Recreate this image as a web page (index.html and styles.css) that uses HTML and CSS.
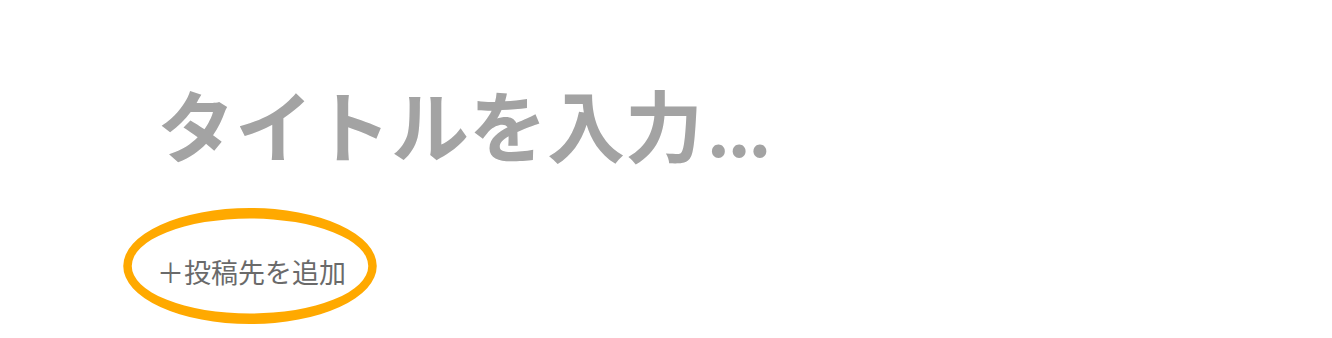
FILE: index.html
```html
<!DOCTYPE html>
<html lang="ja">
<head>
<meta charset="utf-8">
<link rel="stylesheet" href="styles.css">
</head>
<body>
<main class="editor">
  <h1 class="title">タイトルを入力<span class="dots">...</span></h1>
  <div class="dest">
    <span class="dest-btn">＋投稿先を追加</span>
    <svg class="mark" width="264" height="128" viewBox="0 0 264 128" aria-hidden="true">
      <path fill="#ffa900" fill-rule="evenodd" d="M5.25,64 a126.75,58 0 1,0 253.5,0 a126.75,58 0 1,0 -253.5,0 Z M13.75,64 a118.25,47.5 0 1,0 236.5,0 a118.25,47.5 0 1,0 -236.5,0 Z"/>
    </svg>
  </div>
</main>
</body>
</html>
```
FILE: styles.css
```css
html, body {
  margin: 0;
  padding: 0;
  background: #ffffff;
}
body {
  width: 1332px;
  height: 338px;
  overflow: hidden;
  font-family: "Noto Sans CJK JP", "Noto Sans", sans-serif;
}
.editor {
  padding: 69px 0 0 157px;
}
.title {
  margin: 0;
  height: 108px;
  font-size: 78px;
  line-height: 108px;
  font-weight: 700;
  color: #a3a3a3;
}
.dots {
  font-size: 70px;
  line-height: 1;
  letter-spacing: -2px;
  margin-left: 4px;
}
.dest {
  position: relative;
  margin-top: 75px;
  height: 40px;
  display: flex;
  align-items: center;
}
.dest-btn {
  font-size: 27px;
  line-height: 40px;
  color: #6a6a6a;
}
.mark {
  position: absolute;
  left: -39px;
  top: -50px;
}
```
